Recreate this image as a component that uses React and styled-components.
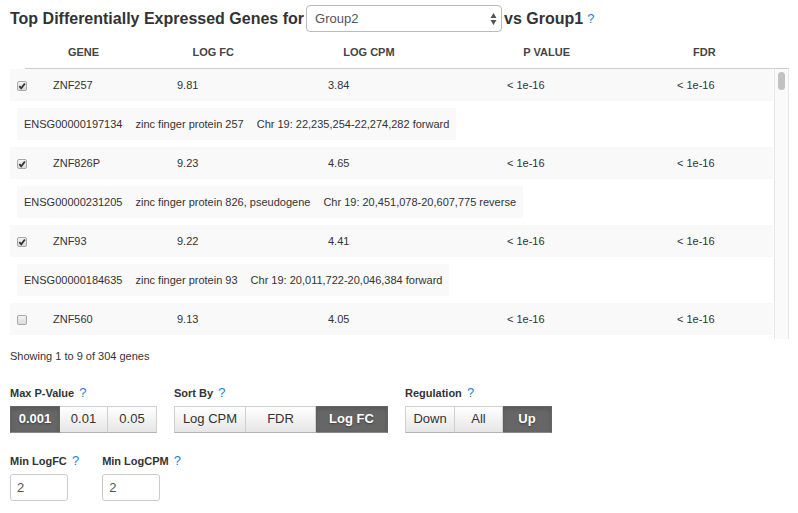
import React, { useState } from "react";
import styled, { createGlobalStyle, css } from "styled-components";

const GlobalStyle = createGlobalStyle`
  * { box-sizing: border-box; }
  body {
    margin: 0;
    background: #fff;
    color: #333;
    font: 11px/18px "Liberation Sans", Arial, sans-serif;
  }
  button, input, select { font-family: inherit; }
`;

const Page = styled.main`
  padding: 5px 9px 12px 10px;
`;

const Title = styled.h1`
  display: flex;
  align-items: center;
  gap: 2px;
  margin: 0;
  font-size: 16px;
  line-height: 27px;
  font-weight: bold;
  white-space: nowrap;
`;

const SelectWrap = styled.span`
  display: grid;
  width: 196px;
  align-items: center;

  > * { grid-area: 1 / 1; }
  > svg { justify-self: end; margin-right: 5px; pointer-events: none; }
`;

const GroupSelect = styled.select`
  width: 100%;
  height: 27px;
  padding: 0 8px;
  appearance: none;
  border: 1px solid #bbb;
  border-radius: 4px;
  background: #fff;
  color: #555;
  font-size: 13px;
`;

const HelpLink = styled.a`
  margin-left: 2px;
  color: #1a82d0;
  font-size: 13px;
  font-weight: normal;
  text-decoration: none;
`;

const HeaderArea = styled.div`
  padding-left: 15px;
`;

const Table = styled.table`
  width: 100%;
  table-layout: fixed;
  border-collapse: collapse;
`;

const HeadCell = styled.th`
  height: 36px;
  padding: 4px 0 0;
  border-bottom: 1px solid #ccc;
  color: #444;
  font-weight: bold;
  text-align: center;
  text-transform: uppercase;
`;

const Viewport = styled.div`
  display: flex;
  gap: 1px;
  min-height: 270px;
`;

const Rows = styled.div`
  flex: 1;
  min-width: 0;
`;

const GeneRow = styled.tr`
  height: 32px;
  background: #f9f9f9;
`;

const Cell = styled.td`
  padding: 0 7px;
  white-space: nowrap;
`;

const DetailCell = styled.td`
  padding: 7px;
`;

const Detail = styled.div`
  display: flex;
  gap: 13px;
  width: max-content;
  padding: 7px;
  background: #f9f9f9;
`;

const Tick = styled.input`
  display: block;
  appearance: none;
  width: 10px;
  height: 10px;
  margin: 2px 0 0;
  border: 1px solid #a9a9a9;
  border-radius: 2px;
  background: linear-gradient(#f2f2f2, #dcdcdc);
`;

const TickBox = styled.span`
  display: grid;
  width: 10px;

  > * { grid-area: 1 / 1; }
  > svg { margin-top: 2px; pointer-events: none; }
`;

const Track = styled.div`
  width: 15px;
  padding: 3px;
  border: solid #e7e7e7;
  border-width: 0 1px;
  background: #fafafa;
`;

const Thumb = styled.div`
  height: 18px;
  border-radius: 4px;
  background: #c1c1c1;
`;

const Summary = styled.p`
  margin: 8px 0 19px;
`;

const Controls = styled.div`
  display: flex;
  flex-wrap: wrap;
  gap: ${(p) => p.$gap};
  margin-bottom: 19px;
`;

const Field = styled.div`
  min-width: 0;
`;

const labelText = css`
  display: inline-block;
  margin-bottom: 4px;
  font-weight: bold;
`;

const Caption = styled.span`
  ${labelText}
`;

const Label = styled.label`
  ${labelText}
`;

const ButtonGroup = styled.div`
  display: flex;
`;

const GroupButton = styled.button`
  width: ${(p) => p.$width};
  height: 27px;
  padding: 0;
  border: 1px solid #d0d0d0;
  border-bottom-color: #b3b3b3;
  background: linear-gradient(#fff, #e6e6e6);
  color: #333;
  font-size: 13px;
  line-height: 18px;

  & + & { border-left-width: 0; }

  ${(p) =>
    p.$active &&
    css`
      border-color: #666 #666 #888;
      background: #666;
      box-shadow: inset 0 2px 4px rgba(0, 0, 0, 0.15);
      color: #fff;
      font-weight: bold;
      text-shadow: 0 1px 2px rgba(0, 0, 0, 0.4);
    `}
`;

const NumberBox = styled.input`
  display: block;
  width: 58px;
  height: 27px;
  padding: 0 6px;
  border: 1px solid #ccc;
  border-radius: 3px;
  background: #fff;
  color: #555;
  font-size: 13px;
`;

const genes = [
  { name: "ZNF257", fc: "9.81", cpm: "3.84", detail: ["ENSG00000197134", "zinc finger protein 257", "Chr 19: 22,235,254-22,274,282 forward"] },
  { name: "ZNF826P", fc: "9.23", cpm: "4.65", detail: ["ENSG00000231205", "zinc finger protein 826, pseudogene", "Chr 19: 20,451,078-20,607,775 reverse"] },
  { name: "ZNF93", fc: "9.22", cpm: "4.41", detail: ["ENSG00000184635", "zinc finger protein 93", "Chr 19: 20,011,722-20,046,384 forward"] },
  { name: "ZNF560", fc: "9.13", cpm: "4.05", detail: null },
];

const headings = ["Gene", "Log FC", "Log CPM", "P Value", "FDR", ""];
const headWidths = [117, 142, 169, 186, 129, 20];
const bodyWidths = [36, 124, 151, 179, 170, 103];

function Columns({ widths }) {
  const total = widths.reduce((sum, w) => sum + w, 0);
  return (
    <colgroup>
      {widths.map((w, i) => (
        <col key={i} width={`${(w / total) * 100}%`} />
      ))}
    </colgroup>
  );
}

function GeneEntry({ gene }) {
  const [open, setOpen] = useState(gene.detail !== null);
  return (
    <>
      <GeneRow>
        <Cell>
          <TickBox>
            <Tick
              type="checkbox"
              aria-label={gene.name}
              checked={open}
              onChange={() => setOpen(!open)}
            />
            {open && (
              <svg width="10" height="10" viewBox="0 0 10 10" aria-hidden="true">
                <path d="M2.3 5.2 4.2 7.3 7.9 2.5" fill="none" stroke="#333" strokeWidth="1.8" />
              </svg>
            )}
          </TickBox>
        </Cell>
        <Cell>{gene.name}</Cell>
        <Cell>{gene.fc}</Cell>
        <Cell>{gene.cpm}</Cell>
        <Cell>&lt; 1e-16</Cell>
        <Cell>&lt; 1e-16</Cell>
      </GeneRow>
      {open && gene.detail && (
        <tr>
          <DetailCell colSpan={6}>
            <Detail>
              {gene.detail.map((text) => (
                <span key={text}>{text}</span>
              ))}
            </Detail>
          </DetailCell>
        </tr>
      )}
    </>
  );
}

function Choice({ label, options, initial, widths }) {
  const [value, setValue] = useState(initial);
  return (
    <Field>
      <Caption>{label}</Caption> <HelpLink href="#">?</HelpLink>
      <ButtonGroup role="group" aria-label={label}>
        {options.map((option, i) => (
          <GroupButton
            key={option}
            type="button"
            $width={widths[i]}
            $active={option === value}
            aria-pressed={option === value}
            onClick={() => setValue(option)}
          >
            {option}
          </GroupButton>
        ))}
      </ButtonGroup>
    </Field>
  );
}

function NumberField({ id, label }) {
  return (
    <Field>
      <Label htmlFor={id}>{label}</Label> <HelpLink href="#">?</HelpLink>
      <NumberBox id={id} type="text" defaultValue="2" />
    </Field>
  );
}

export default function App() {
  return (
    <Page>
      <GlobalStyle />
      <Title>
        <span>Top Differentially Expressed Genes for</span>
        <SelectWrap>
          <GroupSelect aria-label="Group" defaultValue="Group2">
            <option>Group2</option>
            <option>Group3</option>
          </GroupSelect>
          <svg width="7" height="12" viewBox="0 0 7 12" aria-hidden="true">
            <path d="M3.5 0 6.5 5h-6zM3.5 12 .5 7h6z" fill="#555" />
          </svg>
        </SelectWrap>
        <span>vs Group1</span>
        <HelpLink href="#">?</HelpLink>
      </Title>
      <HeaderArea>
        <Table>
          <Columns widths={headWidths} />
          <thead>
            <tr>
              {headings.map((h) => (
                <HeadCell key={h}>{h}</HeadCell>
              ))}
            </tr>
          </thead>
        </Table>
      </HeaderArea>
      <Viewport>
        <Rows>
          <Table>
            <Columns widths={bodyWidths} />
            <tbody>
              {genes.map((gene) => (
                <GeneEntry key={gene.name} gene={gene} />
              ))}
            </tbody>
          </Table>
        </Rows>
        <Track>
          <Thumb />
        </Track>
      </Viewport>
      <Summary>Showing 1 to 9 of 304 genes</Summary>
      <Controls $gap="17px">
        <Choice label="Max P-Value" options={["0.001", "0.01", "0.05"]} initial="0.001" widths={["50px", "48px", "49px"]} />
        <Choice label="Sort By" options={["Log CPM", "FDR", "Log FC"]} initial="Log FC" widths={["72px", "70px", "72px"]} />
        <Choice label="Regulation" options={["Down", "All", "Up"]} initial="Up" widths={["50px", "48px", "49px"]} />
      </Controls>
      <Controls $gap="23px">
        <NumberField id="min-fc" label="Min LogFC" />
        <NumberField id="min-cpm" label="Min LogCPM" />
      </Controls>
    </Page>
  );
}
